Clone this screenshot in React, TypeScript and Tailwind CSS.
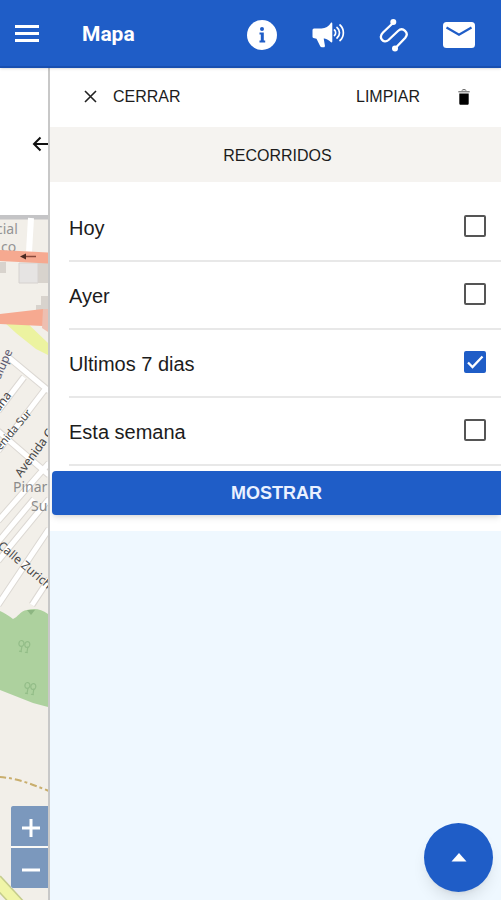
import { useState } from "react"

const RANGES = [
  { id: "hoy", label: "Hoy" },
  { id: "ayer", label: "Ayer" },
  { id: "ultimos-7", label: "Ultimos 7 dias" },
  { id: "esta-semana", label: "Esta semana" },
]

function InfoIcon() {
  return (
    <svg viewBox="0 0 30 30" className="size-[30px]" aria-hidden="true">
      <circle cx="15" cy="15" r="15" fill="#fff" />
      <circle cx="15" cy="9" r="2" fill="#1f5dc7" />
      <path d="M12.500 12.600h4.300v8h1.400v1.900h-5.700v-1.900h1.300v-6h-1.300z" fill="#1f5dc7" />
    </svg>
  )
}

function MegaphoneIcon() {
  return (
    <svg viewBox="0 0 34 28" className="h-7 w-[34px]" fill="none" aria-hidden="true">
      <path
        d="M1.500 9Q1.500 7.500 3 7.500h7.500c4 0 7.300-2.300 9.300-5.500.4-.7 1.500-.6 1.500.5v18c0 1-1 1.200-1.600.5-1.800-2-4-3.300-6.200-3.600h-.8l1.200 7c.2 1.200-.3 1.800-1.200 1.800h-1.700c-.9 0-1.500-.4-1.900-1.200L5.500 17.800l-3.100-.8c-.6-.2-.9-.6-.9-1.300z"
        fill="#fff"
      />
      <path
        d="M23.500 9c1.500 1.200 1.500 4.300 0 5.500M26 6.500c3.300 2.500 3.300 8 0 10.500M29 4c4.500 4 4.500 11.500 0 15.500"
        stroke="#fff"
        strokeWidth="1.700"
        strokeLinecap="round"
      />
    </svg>
  )
}

function RouteIcon() {
  return (
    <svg viewBox="0 0 30 34" className="h-[34px] w-[30px]" fill="none" aria-hidden="true">
      <path
        d="M14 5 4 14.500C-1 19.500 4.500 26.500 9.500 22L19 13c4.800-4.300 11.500 1.500 7.300 6.800L16.500 30"
        stroke="#fff"
        strokeWidth="2.300"
      />
      <circle cx="14.300" cy="4" r="3" fill="#fff" />
      <circle cx="16" cy="30.500" r="3" fill="#fff" />
    </svg>
  )
}

function MailIcon() {
  return (
    <svg viewBox="0 0 32 26" className="h-[26px] w-8" fill="none" aria-hidden="true">
      <rect width="32" height="26" rx="3.500" fill="#fff" />
      <path d="m3.500 5.500 12.500 7.300 12.500-7.300" stroke="#1f5dc7" strokeWidth="2.200" />
    </svg>
  )
}

function TrashIcon() {
  return (
    <svg viewBox="0 0 12 16" className="h-4 w-3" aria-hidden="true">
      <path d="M1.300 4.500h9.400v9.700c0 1-.5 1.500-1.500 1.500H2.800c-1 0-1.500-.5-1.500-1.500z" />
      <path d="M.3 2.800h11.400M4 1.700l.7-1h2.600l.7 1" stroke="#555" fill="none" />
    </svg>
  )
}

function TreeMark({ x, y }: { x: number; y: number }) {
  return (
    <g transform={`translate(${x} ${y}) rotate(10)`} stroke="#93bd88" strokeWidth="1.200" fill="none">
      <path d="M-2 6V0M4 6V0M-4 6h3M2 6h3" />
      <ellipse cx="-3" cy="-2" rx="2.500" ry="3" />
      <ellipse cx="3" cy="-2" rx="2.500" ry="3" />
    </g>
  )
}

function StreetMap() {
  return (
    <svg
      viewBox="0 0 48 685"
      preserveAspectRatio="xMinYMin slice"
      className="absolute inset-0 size-full"
      fontFamily="'Noto Sans', sans-serif"
      aria-label="Mapa"
    >
      <rect width="48" height="685" fill="#f2efe9" />
      {/* edificios */}
      <path d="M0 47h6v11H0zM38 47h10v21H38zM41 81h7v16h-12v-7h5z" fill="#d8d3cd" />
      <path d="M19 48h19v20H19z" fill="#e6e4e3" stroke="#d6d2cf" />
      <path d="M0 2h48" stroke="#c4c4c6" strokeWidth="5" />
      <path d="M31 3 29 37" stroke="#fff" strokeWidth="6" />
      <g fontSize="14" fill="#949494">
        <text x="-4" y="19">cial</text>
        <text x="1" y="37">co</text>
      </g>
      {/* avenidas principales */}
      <path d="M-2 40.500 50 43" stroke="#f6a990" strokeWidth="11" />
      <path d="M24 41.500h12" stroke="#8a4a3c" strokeWidth="1.500" />
      <path d="m20 41.500 6-3v6z" fill="#4a2a22" />
      <path d="m0 107 14 2 34 29v-7L20 104z" fill="#d9d8b0" />
      <path d="M3 106h22l23 22v12L36 134 16 118z" fill="#ecf3a0" />
      <path d="m0 99 43-5v17L0 109z" fill="#f6a990" />
      <path d="M43 94h5v23l-6-4z" fill="#edbfb1" />
      {/* calles */}
      {["#dcd8d3", "#fff"].map((color, i) => (
        <path
          key={color}
          d="M8 142 49 176M24 162-2 196M46 173-2 236M-2 216 49 260M49 248-2 306M34 284-2 327M49 314-2 390M32 390 49 364M49 284-2 346"
          stroke={color}
          strokeWidth={i === 0 ? 7 : 5}
          fill="none"
        />
      ))}
      <g fontSize="12" fill="#454545">
        <text transform="translate(0 165) rotate(-66)" fill="#5a5870">alupe</text>
        <text transform="translate(-1 197) rotate(-52)">ana</text>
        <text transform="translate(-3 240) rotate(-50)" fontSize="11">venida Sur</text>
        <text transform="translate(21 263) rotate(-54)">Avenida C</text>
        <text transform="translate(-3 332) rotate(40)">Calle Zurich</text>
      </g>
      <g fontSize="14" fill="#8b8b8b">
        <text x="13" y="277">Pinar</text>
        <text x="31" y="296">Su</text>
      </g>
      {/* parque */}
      <path d="M0 396c5 2 9 5 13 8 5-2 7-8 14-9 8-2 14-1 21 4v93l-15-4L0 475z" fill="#add19e" />
      <path d="m27 395 4 5 4-5z" fill="#8db682" />
      <TreeMark x={24} y={431} />
      <TreeMark x={30} y={473} />
      <path d="M-1 562c18 1 32 7 50 14" stroke="#c9ae6d" strokeWidth="2" strokeDasharray="7 3 3 3" fill="none" />
      <path d="m-4 665 24 26" stroke="#c5cc8c" strokeWidth="13" />
      <path d="m-4 665 24 26" stroke="#f0f5a8" strokeWidth="10" />
    </svg>
  )
}

export default function App() {
  const [selected, setSelected] = useState<string[]>(["ultimos-7"])

  function toggle(id: string) {
    setSelected((prev) =>
      prev.includes(id) ? prev.filter((r) => r !== id) : [...prev, id]
    )
  }

  return (
    <div className="flex min-h-screen flex-col bg-white font-['Liberation_Sans',Arial,sans-serif] text-[#1c1c1c]">
      <header className="relative z-10 flex h-17 items-center border-b-2 border-[#184fb0] bg-[#1f5dc7] pr-[26px] pl-[15px] text-white shadow-sm">
        <button aria-label="Menu" className="flex flex-col gap-1">
          <span className="h-[3px] w-6 bg-white" />
          <span className="h-[3px] w-6 bg-white" />
          <span className="h-[3px] w-6 bg-white" />
        </button>
        <h1 className="mt-1 ml-[43px] font-[Roboto,sans-serif] text-[21px] font-bold">Mapa</h1>
        <nav className="mt-1 ml-auto flex items-center gap-[34px]">
          <button aria-label="Información"><InfoIcon /></button>
          <button aria-label="Avisos"><MegaphoneIcon /></button>
          <button aria-label="Recorridos"><RouteIcon /></button>
          <button aria-label="Mensajes"><MailIcon /></button>
        </nav>
      </header>

      <div className="flex flex-1">
        <aside className="flex w-12 shrink-0 flex-col overflow-hidden">
          <div className="flex h-[147px] items-center pt-1 pl-8">
            <button aria-label="Volver" className="shrink-0">
              <svg viewBox="0 0 20 16" className="h-4 w-5" fill="none" stroke="#111" strokeWidth="2" aria-hidden="true">
                <path d="M8.500 1.500 2 8l6.500 6.500M2 8h18" />
              </svg>
            </button>
          </div>
          <div className="relative flex flex-1 flex-col justify-end overflow-hidden">
            <StreetMap />
            <div className="relative mb-3 ml-[11px] flex flex-col gap-0.5 bg-white/60 text-white">
              <button aria-label="Acercar" className="flex h-10 items-center rounded-tl-xs bg-[#7b98bd] pt-1 pl-[11px]">
                <svg viewBox="0 0 18 18" className="size-[18px]" stroke="#fff" strokeWidth="3" aria-hidden="true">
                  <path d="M0 9h18M9 0v18" />
                </svg>
              </button>
              <button aria-label="Alejar" className="flex h-10 items-center rounded-bl-xs bg-[#7b98bd] pt-1 pl-[11px]">
                <svg viewBox="0 0 18 18" className="size-[18px]" stroke="#fff" strokeWidth="3" aria-hidden="true">
                  <path d="M0 9h18" />
                </svg>
              </button>
            </div>
          </div>
        </aside>

        <main className="flex flex-1 flex-col border-l-2 border-[#c8c8c8] bg-[#eff8ff]">
          <div className="flex h-[59px] items-center justify-between bg-white pr-[31px] pb-0.5 pl-[34px] text-base">
            <button className="flex items-center gap-4">
              <svg viewBox="0 0 13 13" className="size-[13px]" stroke="#222" strokeWidth="1.600" aria-hidden="true">
                <path d="m1 1 11 11M12 1 1 12" />
              </svg>
              CERRAR
            </button>
            <button className="flex items-center gap-[38px]">
              LIMPIAR
              <TrashIcon />
            </button>
          </div>

          <h2 className="flex h-[55px] items-center justify-center bg-[#f5f3f0] pt-0.5 pl-1 text-base">
            RECORRIDOS
          </h2>

          <form className="bg-white pt-3 pb-4" onSubmit={(e) => e.preventDefault()}>
            <ul className="pl-[19px]">
              {RANGES.map((r) => (
                <li key={r.id} className="border-b-2 border-[#e8e8e8]">
                  <label className="flex h-[66px] items-center justify-between pr-[15px] text-xl">
                    <span className="pt-0.5">{r.label}</span>
                    <span className="relative mb-0.5 size-[22px]">
                      <input
                        type="checkbox"
                        checked={selected.includes(r.id)}
                        onChange={() => toggle(r.id)}
                        className="peer block size-[22px] appearance-none rounded-xs border-2 border-[#555] bg-white checked:border-[#1f5dc7] checked:bg-[#1f5dc7]"
                      />
                      <svg
                        viewBox="0 0 22 22"
                        className="pointer-events-none absolute inset-0 hidden size-[22px] peer-checked:block"
                        fill="none"
                        stroke="#fff"
                        strokeWidth="2.300"
                        aria-hidden="true"
                      >
                        <path d="m4 11.500 4.500 4.500L18.500 5.500" />
                      </svg>
                    </span>
                  </label>
                </li>
              ))}
            </ul>
            <div className="pt-[5px] pl-0.5">
              <button
                type="submit"
                className="h-11 w-full rounded-l-sm bg-[#1f5dc7] text-lg font-bold text-[#eaf1ff] shadow-md"
              >
                MOSTRAR
              </button>
            </div>
          </form>
        </main>
      </div>

      <button
        aria-label="Subir"
        className="fixed right-2 bottom-2 flex size-[69px] items-center justify-center rounded-full bg-[#1f5dc7] shadow-lg"
      >
        <svg viewBox="0 0 16 9" className="h-[9px] w-4" fill="#fff" aria-hidden="true">
          <path d="m8 0 7.500 8.500H.5z" />
        </svg>
      </button>
    </div>
  )
}
